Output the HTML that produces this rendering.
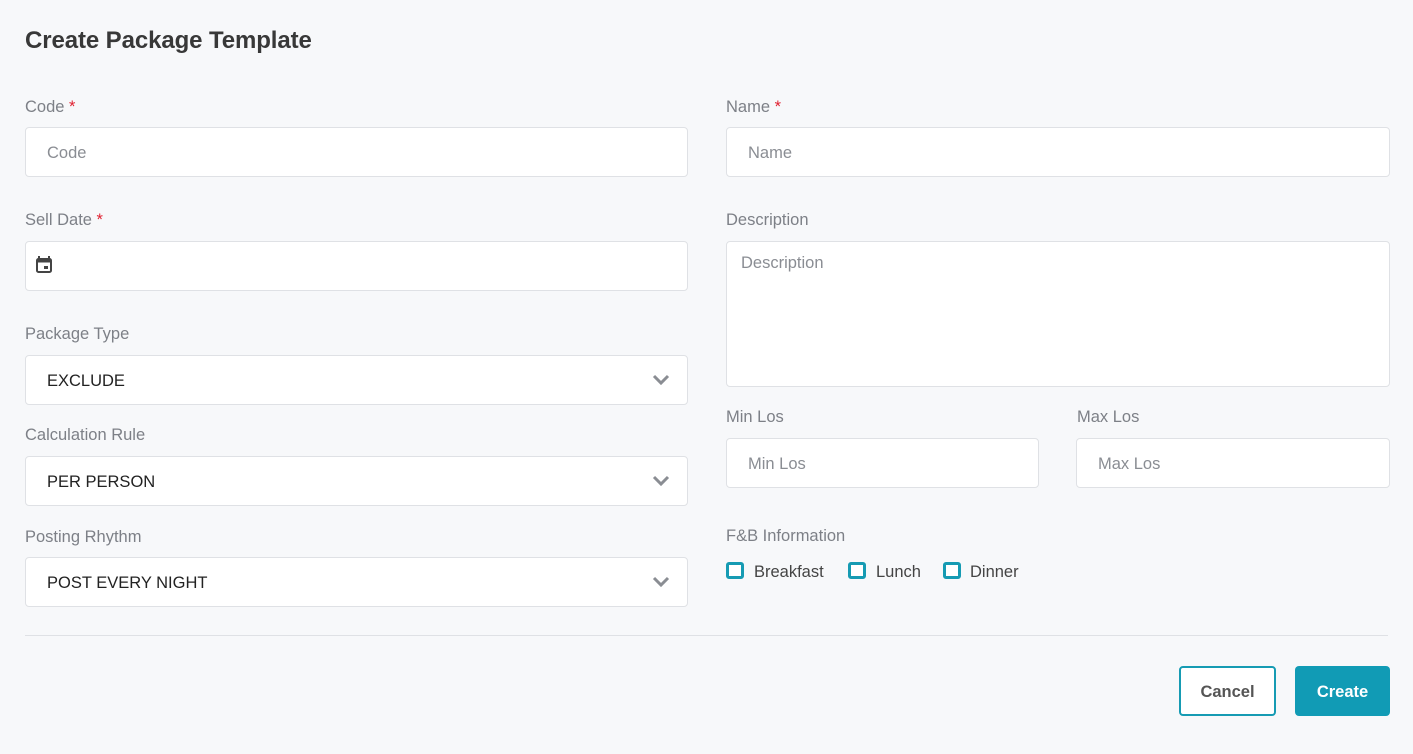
<!DOCTYPE html>
<html><head><style>
*{box-sizing:border-box;margin:0;padding:0}
body{width:1413px;height:754px;background:#f7f8fa;font-family:"Liberation Sans",sans-serif;position:relative;overflow:hidden}
.a{position:absolute}
h1{position:absolute;left:25px;top:27px;font-size:24px;font-weight:bold;color:#383838;letter-spacing:-0.1px}
.lbl{position:absolute;font-size:16.5px;color:#7d8087}
.lbl b{color:#e02030;font-weight:normal}
.box{position:absolute;background:#fff;border:1px solid #dfe1e5;border-radius:4px;height:50px;font-size:16.5px;color:#8a8d93;padding-left:21px;line-height:51px}
.sel{color:#222}
.chev{position:absolute;right:17px;top:18px}
.cb{position:absolute;top:562px;width:18px;height:17px;border:3px solid #169bb3;border-radius:3px;background:#fff}
.cbl{position:absolute;top:563px;font-size:16.5px;color:#444}
</style></head><body>
<h1>Create Package Template</h1>
<div class="lbl" style="left:25px;top:98px">Code <b>*</b></div>
<div class="box" style="left:25px;top:127px;width:663px">Code</div>
<div class="lbl" style="left:726px;top:98px">Name <b>*</b></div>
<div class="box" style="left:726px;top:127px;width:664px">Name</div>
<div class="lbl" style="left:25px;top:211px">Sell Date <b>*</b></div>
<div class="box" style="left:25px;top:241px;width:663px">
<svg class="a" style="left:9px;top:13px" width="18" height="20" viewBox="0 0 18 20"><path d="M4 1v3M14 1v3" stroke="#444" stroke-width="2"/><rect x="2" y="4" width="14" height="13" rx="1.5" fill="none" stroke="#444" stroke-width="2"/><rect x="2" y="4" width="14" height="3.5" fill="#444"/><rect x="9" y="11" width="4" height="3" fill="#444"/></svg></div>
<div class="lbl" style="left:726px;top:211px">Description</div>
<div class="box" style="left:726px;top:241px;width:664px;height:146px;line-height:normal;padding:12px 14px">Description</div>
<div class="lbl" style="left:25px;top:325px">Package Type</div>
<div class="box sel" style="left:25px;top:355px;width:663px">EXCLUDE<svg class="chev" width="18" height="12" viewBox="0 0 18 12"><path d="M2 2l7 7 7-7" fill="none" stroke="#8a8d93" stroke-width="3"/></svg></div>
<div class="lbl" style="left:25px;top:426px">Calculation Rule</div>
<div class="box sel" style="left:25px;top:456px;width:663px">PER PERSON<svg class="chev" width="18" height="12" viewBox="0 0 18 12"><path d="M2 2l7 7 7-7" fill="none" stroke="#8a8d93" stroke-width="3"/></svg></div>
<div class="lbl" style="left:25px;top:528px">Posting Rhythm</div>
<div class="box sel" style="left:25px;top:557px;width:663px">POST EVERY NIGHT<svg class="chev" width="18" height="12" viewBox="0 0 18 12"><path d="M2 2l7 7 7-7" fill="none" stroke="#8a8d93" stroke-width="3"/></svg></div>
<div class="lbl" style="left:726px;top:408px">Min Los</div>
<div class="box" style="left:726px;top:438px;width:313px">Min Los</div>
<div class="lbl" style="left:1077px;top:408px">Max Los</div>
<div class="box" style="left:1076px;top:438px;width:314px">Max Los</div>
<div class="lbl" style="left:726px;top:527px">F&amp;B Information</div>
<div class="cb" style="left:726px"></div><div class="cbl" style="left:754px">Breakfast</div>
<div class="cb" style="left:848px"></div><div class="cbl" style="left:876px">Lunch</div>
<div class="cb" style="left:943px"></div><div class="cbl" style="left:970px">Dinner</div>
<div class="a" style="left:25px;top:635px;width:1363px;height:1px;background:#dfe1e5"></div>
<div class="a" style="left:1179px;top:666px;width:97px;height:50px;border:2px solid #169bb3;border-radius:4px;background:#fff;color:#555;font-weight:bold;font-size:16.5px;text-align:center;line-height:49px">Cancel</div>
<div class="a" style="left:1295px;top:666px;width:95px;height:50px;border-radius:4px;background:#119bb5;color:#fff;font-weight:bold;font-size:16.5px;text-align:center;line-height:52px">Create</div>
</body></html>
